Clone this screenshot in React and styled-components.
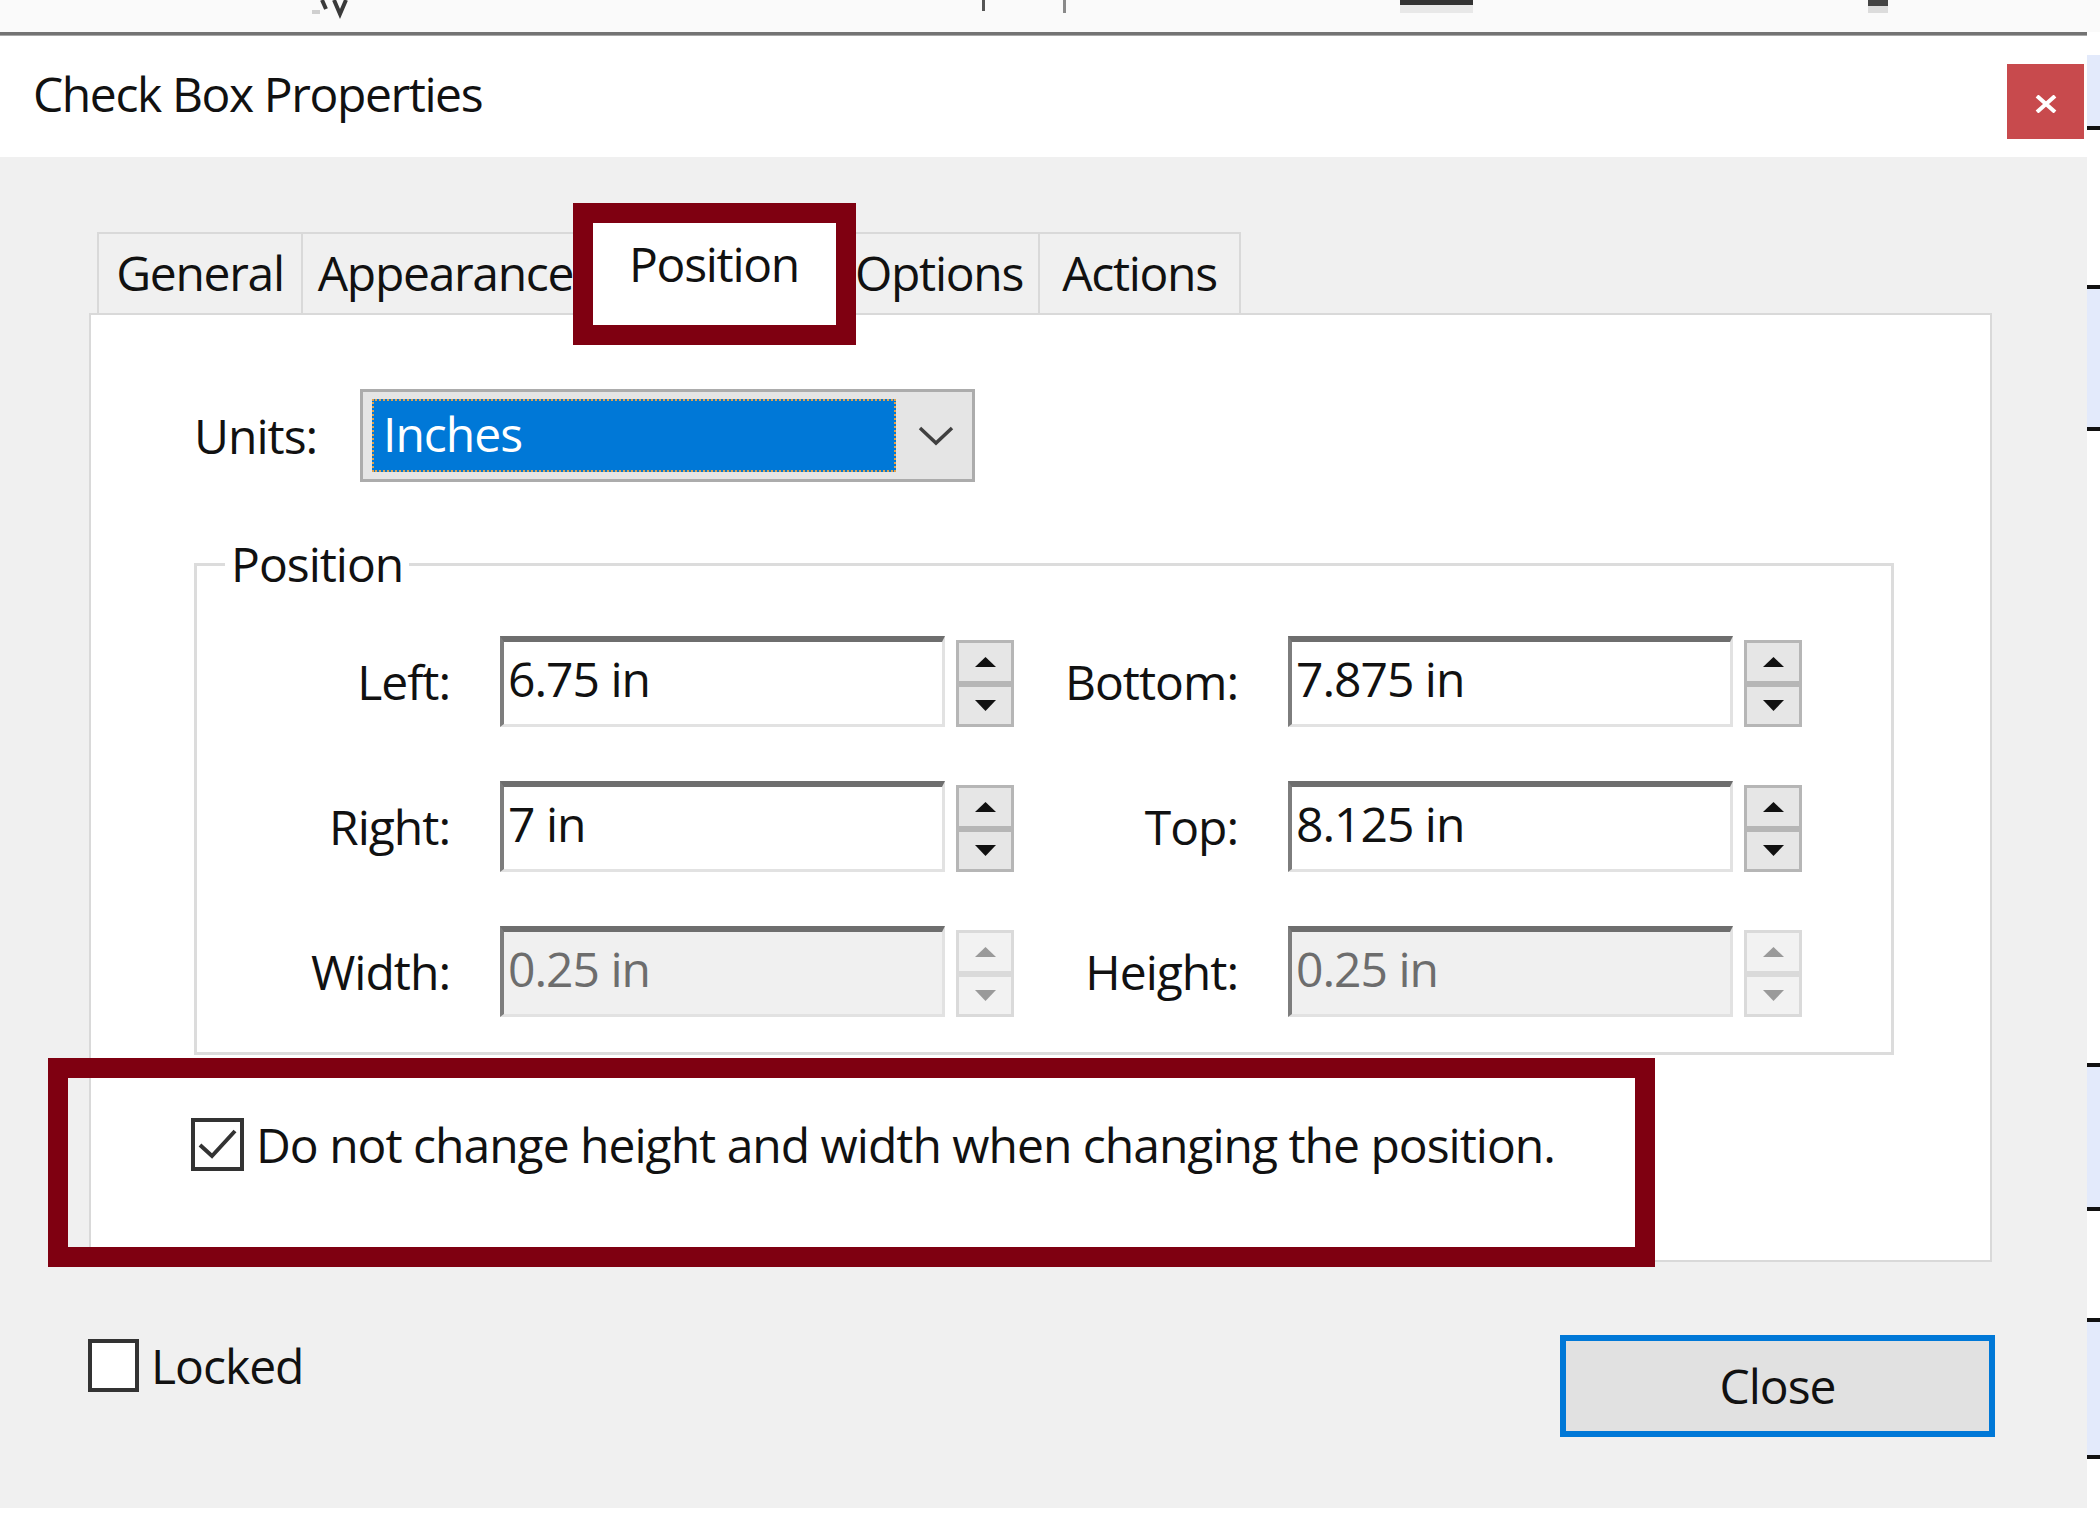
import React from "react";
import styled, { createGlobalStyle } from "styled-components";

const Global = createGlobalStyle`
  html, body { margin: 0; padding: 0; background: #ffffff; }
  * { box-sizing: border-box; }
`;

const Screen = styled.div`
  width: 2100px;
  height: 1540px;
  display: flex;
  flex-direction: column;
  background: #ffffff;
  overflow: hidden;
  font-family: "Open Sans", "Noto Sans", sans-serif;
  font-size: 48px;
  letter-spacing: -1px;
  line-height: 1;
  color: #111111;
`;

const TopStrip = styled.div`
  flex: none;
  height: 32px;
  background: #fafafa;
  svg { display: block; }
`;

const Main = styled.div`
  flex: 1;
  display: flex;
  min-height: 0;
`;

const Window = styled.div`
  flex: none;
  width: 2087px;
  display: flex;
  flex-direction: column;
  align-self: flex-start;
`;

const Rule = styled.div`
  height: 4px;
  background: #737373;
  border-bottom: 1px solid #a8a8a8;
`;

const TitleBar = styled.div`
  height: 121px;
  background: #ffffff;
  display: flex;
  justify-content: space-between;
  align-items: flex-start;
  padding: 0 3px 0 33px;
`;

const Title = styled.div`
  align-self: center;
  padding-bottom: 6px;
  letter-spacing: -1.4px;
`;

const CloseX = styled.div`
  margin-top: 28px;
  width: 77px;
  height: 75px;
  background: #c84a4d;
  display: flex;
  align-items: center;
  justify-content: center;
  svg { display: block; margin-top: 4px; }
`;

const Body = styled.div`
  height: 1351px;
  background: #f0f0f0;
  padding: 75px 95px 0 89px;
  display: flex;
  flex-direction: column;
`;

const TabStrip = styled.div`
  height: 81px;
  display: flex;
  align-items: flex-start;
  padding-left: 8px;
  position: relative;
  z-index: 2;
`;

const Tab = styled.div`
  position: relative;
  width: ${(p) => p.$w}px;
  height: ${(p) => (p.$active ? 96 : 81)}px;
  margin-top: ${(p) => (p.$active ? -12 : 0)}px;
  margin-left: -2px;
  background: ${(p) => (p.$active ? "#ffffff" : "#f0f0f0")};
  border: 2px solid #d9d9d9;
  border-bottom: none;
  display: flex;
  align-items: center;
  justify-content: center;
  padding-bottom: ${(p) => (p.$active ? 10 : 0)}px;
  white-space: nowrap;
  letter-spacing: -1.3px;
  z-index: ${(p) => (p.$active ? 2 : 1)};
  &:first-child { margin-left: 0; }
`;

const TabText = styled.span`
  display: block;
  line-height: 1.3;
`;

const Highlight = styled.div`
  position: absolute;
  left: ${(p) => p.$x}px;
  top: ${(p) => p.$y}px;
  width: ${(p) => p.$w}px;
  height: ${(p) => p.$h}px;
  border: 20px solid #7f0011;
  pointer-events: none;
  z-index: 5;
`;

const Panel = styled.div`
  position: relative;
  z-index: 1;
  width: 1903px;
  height: 949px;
  background: #ffffff;
  border: 2px solid #d9d9d9;
  padding: 74px 0 0 103px;
  display: flex;
  flex-direction: column;
  align-items: flex-start;
`;

const UnitsRow = styled.div`
  display: flex;
  align-items: center;
  height: 93px;
`;

const UnitsLabel = styled.div`
  width: 166px;
`;

const Select = styled.div`
  width: 615px;
  height: 93px;
  border: 3px solid #acacac;
  background: #e5e5e5;
  padding: 7px 0 7px 9px;
  display: flex;
  align-items: stretch;
`;

const SelectValue = styled.div`
  width: 524px;
  background: #0078d7;
  border: 2px dotted #e3a24a;
  color: #ffffff;
  display: flex;
  align-items: center;
  padding: 0 0 4px 9px;
`;

const Chevron = styled.div`
  flex: 1;
  display: flex;
  align-items: center;
  justify-content: center;
  padding-left: 4px;
  svg { display: block; }
`;

const Group = styled.fieldset`
  margin: 58px 0 0 0;
  width: 1700px;
  border: 3px solid #dcdcdc;
  padding: 48px 0 35px 0;
  display: flex;
  flex-direction: column;
  gap: 54px;
`;

const Legend = styled.legend`
  margin-left: 28px;
  padding: 0 6px;
  line-height: 48px;
`;

const FieldRow = styled.div`
  display: flex;
  height: 91px;
`;

const Field = styled.div`
  display: flex;
  align-items: stretch;
`;

const FieldLabel = styled.div`
  width: ${(p) => p.$w}px;
  margin-right: 50px;
  display: flex;
  align-items: center;
  justify-content: flex-end;
`;

const Input = styled.div`
  width: 445px;
  height: 91px;
  background: ${(p) => (p.$disabled ? "#f0f0f0" : "#ffffff")};
  color: ${(p) => (p.$disabled ? "#6d6d6d" : "#111111")};
  border-top: 6px solid #6e6e6e;
  border-left: 4px solid #7d7d7d;
  border-right: 3px solid #e2e2e2;
  border-bottom: 3px solid #e2e2e2;
  padding: 0 0 8px 4px;
  display: flex;
  align-items: center;
`;

const Spinner = styled.div`
  width: 58px;
  height: 87px;
  margin-left: 11px;
  align-self: flex-end;
  display: flex;
  flex-direction: column;
`;

const SpinButton = styled.div`
  flex: 1;
  border: 3px solid ${(p) => (p.$disabled ? "#dadada" : "#b6b6b6")};
  background: ${(p) => (p.$disabled ? "#f2f2f2" : "#e6e6e6")};
  display: flex;
  align-items: center;
  justify-content: center;
  svg { display: block; }
`;

const CheckRow = styled.div`
  position: relative;
  margin: 63px 0 0 -3px;
  display: flex;
  align-items: center;
  gap: 12px;
`;

const Box = styled.div`
  width: ${(p) => p.$w}px;
  height: 53px;
  border: 4px solid #333333;
  background: #ffffff;
  flex: none;
  svg { display: block; }
`;

const Footer = styled.div`
  margin-top: 73px;
  display: flex;
  justify-content: space-between;
  align-items: flex-start;
`;

const LockRow = styled.div`
  margin: 4px 0 0 -1px;
  display: flex;
  align-items: center;
  gap: 12px;
`;

const Button = styled.div`
  width: 435px;
  height: 102px;
  margin-right: -3px;
  border: 6px solid #0078d7;
  background: #e1e1e1;
  display: flex;
  align-items: center;
  justify-content: center;
`;

const DocEdge = styled.div`
  flex: 1;
  display: flex;
  flex-direction: column;
  background: #ffffff;
`;

const Band = styled.div`
  flex: none;
  height: ${(p) => p.$h}px;
  background: ${(p) => (p.$blue ? "#e3eafb" : "#ffffff")};
`;

const Tick = styled.div`
  flex: none;
  height: 4px;
  background: #111111;
`;

const Up = ({ c }) => (
  <svg width="21" height="10" viewBox="0 0 21 10">
    <polygon points="0,10 10.5,0 21,10" fill={c} />
  </svg>
);
const Down = ({ c }) => (
  <svg width="21" height="11" viewBox="0 0 21 11">
    <polygon points="0,0 21,0 10.5,11" fill={c} />
  </svg>
);

const Spin = ({ disabled }) => {
  const c = disabled ? "#9a9a9a" : "#111111";
  return (
    <Spinner>
      <SpinButton $disabled={disabled}><Up c={c} /></SpinButton>
      <SpinButton $disabled={disabled}><Down c={c} /></SpinButton>
    </Spinner>
  );
};

const NumField = ({ label, value, labelW, disabled }) => (
  <Field>
    <FieldLabel $w={labelW}>{label}</FieldLabel>
    <Input $disabled={disabled}>{value}</Input>
    <Spin disabled={disabled} />
  </Field>
);

const rows = [
  [["Left:", "6.75 in"], ["Bottom:", "7.875 in"], false],
  [["Right:", "7 in"], ["Top:", "8.125 in"], false],
  [["Width:", "0.25 in"], ["Height:", "0.25 in"], true],
];

const tabs = [
  { t: "General", w: 206 },
  { t: "Appearance", w: 289 },
  { t: "Position", w: 252, active: true },
  { t: "Options", w: 202 },
  { t: "Actions", w: 203 },
];

const edge = [
  ["b", 23], ["b", 71, true], ["t"], ["b", 155], ["t"], ["b", 138, true], ["t"],
  ["b", 632], ["t"], ["b", 140, true], ["t"], ["b", 107], ["t"], ["b", 133, true], ["t"],
];

export default function App() {
  return (
    <>
      <Global />
      <Screen>
        <TopStrip>
          <svg width="2100" height="32" viewBox="0 0 2100 32">
            <path d="M322 0 L326 9 M334 0 L340 14 L346 0" stroke="#3a3a3a" strokeWidth="4" fill="none" />
            <rect x="312" y="10" width="8" height="4" fill="#cfcfcf" />
            <rect x="982" y="0" width="3" height="11" fill="#555" />
            <rect x="1063" y="0" width="3" height="13" fill="#8a8a8a" />
            <rect x="1400" y="0" width="73" height="5" fill="#333" />
            <rect x="1400" y="5" width="73" height="8" fill="#e8e8e8" />
            <rect x="1868" y="0" width="20" height="6" fill="#444" />
            <rect x="1868" y="6" width="20" height="7" fill="#dcdcdc" />
          </svg>
        </TopStrip>
        <Main>
          <Window>
            <Rule />
            <TitleBar>
              <Title>Check Box Properties</Title>
              <CloseX>
                <svg width="22" height="18" viewBox="0 0 22 18">
                  <path d="M2 1 L20 17 M20 1 L2 17" stroke="#ffffff" strokeWidth="4" />
                </svg>
              </CloseX>
            </TitleBar>
            <Body>
              <TabStrip>
                {tabs.map((tab) => (
                  <Tab key={tab.t} $w={tab.w} $active={tab.active}>
                    <TabText>{tab.t}</TabText>
                    {tab.active && <Highlight $x={-17} $y={-19} $w={283} $h={142} />}
                  </Tab>
                ))}
              </TabStrip>
              <Panel>
                <UnitsRow>
                  <UnitsLabel>Units:</UnitsLabel>
                  <Select>
                    <SelectValue>Inches</SelectValue>
                    <Chevron>
                      <svg width="36" height="20" viewBox="0 0 36 20">
                        <polyline points="2,2 18,17 34,2" stroke="#404040" strokeWidth="3.5" fill="none" />
                      </svg>
                    </Chevron>
                  </Select>
                </UnitsRow>
                <Group>
                  <Legend>Position</Legend>
                  {rows.map(([a, b, dis]) => (
                    <FieldRow key={a[0]}>
                      <NumField label={a[0]} value={a[1]} labelW={253} disabled={dis} />
                      <NumField label={b[0]} value={b[1]} labelW={224} disabled={dis} />
                    </FieldRow>
                  ))}
                </Group>
                <CheckRow>
                  <Box $w={53}>
                    <svg width="45" height="45" viewBox="0 0 45 45">
                      <polyline points="5,23 17,34 40,9" stroke="#333333" strokeWidth="4" fill="none" />
                    </svg>
                  </Box>
                  <span>Do not change height and width when changing the position.</span>
                  <Highlight $x={-143} $y={-60} $w={1607} $h={209} />
                </CheckRow>
              </Panel>
              <Footer>
                <LockRow>
                  <Box $w={51} />
                  <span>Locked</span>
                </LockRow>
                <Button>Close</Button>
              </Footer>
            </Body>
          </Window>
          <DocEdge>
            {edge.map((e, i) =>
              e[0] === "t" ? <Tick key={i} /> : <Band key={i} $h={e[1]} $blue={e[2]} />
            )}
          </DocEdge>
        </Main>
      </Screen>
    </>
  );
}
